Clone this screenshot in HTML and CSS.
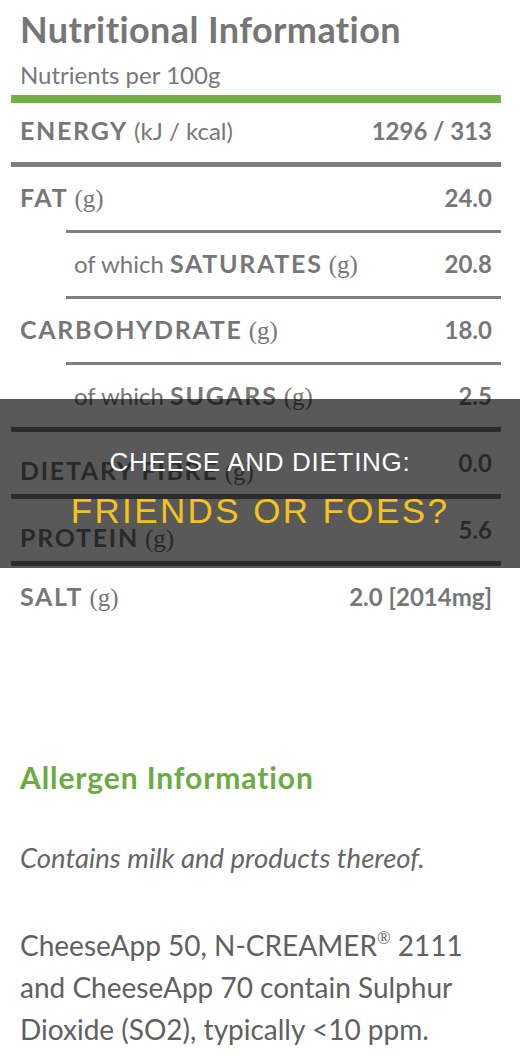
FILE: index.html
```html
<!DOCTYPE html>
<html lang="en">
<head>
<meta charset="utf-8">
<title>Cheese and Dieting: Friends or Foes?</title>
<link rel="stylesheet" href="styles.css">
</head>
<body>
<div class="page">
  <section class="nutrition">
    <h1 class="title">Nutritional Information</h1>
    <p class="subtitle">Nutrients per 100g</p>
    <div class="rule green"></div>

    <div class="row energy"><span class="name"><b>ENERGY</b> <span class="unit">(kJ / kcal)</span></span><b class="val">1296 / 313</b></div>
    <div class="rule thick"></div>
    <div class="row tall"><span class="name"><b>FAT</b> <span class="unit serif">(g)</span></span><b class="val">24.0</b></div>
    <div class="rule thin"></div>
    <div class="row tall sub"><span class="name"><span class="lite">of which</span> <b>SATURATES</b> <span class="unit serif">(g)</span></span><b class="val">20.8</b></div>
    <div class="rule thin"></div>
    <div class="row tall"><span class="name"><b>CARBOHYDRATE</b> <span class="unit serif">(g)</span></span><b class="val">18.0</b></div>
    <div class="rule thin"></div>
    <div class="row sub"><span class="name"><span class="lite">of which</span> <b>SUGARS</b> <span class="unit serif">(g)</span></span><b class="val">2.5</b></div>
    <div class="rule thick"></div>
    <div class="row"><span class="name drop"><b>DIETARY FIBRE</b> <span class="unit serif">(g)</span></span><b class="val">0.0</b></div>
    <div class="rule thick"></div>
    <div class="row"><span class="name drop"><b>PROTEIN</b> <span class="unit serif">(g)</span></span><b class="val">5.6</b></div>
    <div class="rule thick"></div>
    <div class="row"><span class="name"><b>SALT</b> <span class="unit serif">(g)</span></span><b class="val">2.0 [2014mg]</b></div>
  </section>

  <section class="allergen">
    <h2 class="allergen-title">Allergen Information</h2>
    <p class="contains">Contains milk and products thereof.</p>
    <p class="note">CheeseApp 50, N-CREAMER<sup class="reg">®</sup> 2111 and CheeseApp 70 contain Sulphur Dioxide (SO2), typically &lt;10 ppm.</p>
  </section>

  <div class="banner">
    <div class="banner-line1">CHEESE AND DIETING:</div>
    <div class="banner-line2">FRIENDS OR FOES?</div>
  </div>
</div>
</body>
</html>
```

FILE: styles.css
```css
* { box-sizing: border-box; }

html, body {
  margin: 0;
  padding: 0;
  background: #ffffff;
}

.page {
  position: relative;
  width: 520px;
  height: 1063px;
  overflow: hidden;
  font-family: "Lato", "Noto Sans", sans-serif;
  color: #777777;
}

.nutrition {
  margin: 0 19px 0 11px;
}

.title {
  margin: 8px 0 0;
  padding-left: 9px;
  font-size: 36px;
  line-height: 42px;
  font-weight: 700;
  color: #767676;
  letter-spacing: 0.4px;
}

.subtitle {
  margin: 11px 0 0;
  padding-left: 9px;
  font-size: 24px;
  line-height: 28px;
  color: #787878;
}

.rule { background: #7f7f7f; }
.rule.green { height: 8px; margin-top: 6px; background: #70b142; }
.rule.thick { height: 5px; }
.rule.thin { height: 3px; margin-left: 55px; }

.row {
  display: flex;
  justify-content: space-between;
  align-items: flex-start;
  height: 62px;
  padding: 16px 9px 0 9px;
  font-size: 24px;
  line-height: 28px;
  color: #777777;
}
.row.energy { height: 59px; padding-top: 13px; }
.row.tall { height: 63px; padding-top: 16px; }
.row.sub { margin-left: 55px; padding-left: 8px; }

.name { white-space: nowrap; }
.name.drop { margin-top: 8px; }
.name b { font-size: 25px; font-weight: 700; letter-spacing: 1.7px; }
.val { font-weight: 700; letter-spacing: 0; white-space: nowrap; margin-top: 1px; }
.unit { font-weight: 400; }
.serif { font-family: "Liberation Serif", serif; font-size: 25px; }
.lite { font-weight: 400; }

.allergen {
  padding-left: 20px;
}

.allergen-title {
  margin: 132px 0 0;
  font-size: 30px;
  line-height: 34px;
  font-weight: 700;
  color: #6aab44;
  letter-spacing: 0.9px;
}

.contains {
  margin: 48px 0 0;
  font-style: italic;
  font-size: 27.5px;
  line-height: 32px;
  color: #666666;
}

.note {
  margin: 50px 0 0;
  width: 490px;
  font-size: 28px;
  line-height: 42px;
  color: #606060;
}

.reg {
  font-size: 18px;
  vertical-align: 12px;
  line-height: 0;
  font-family: "Liberation Serif", serif;
}

.banner {
  position: absolute;
  left: 0;
  top: 399px;
  width: 520px;
  height: 169px;
  background: rgba(0, 0, 0, 0.65);
  padding-top: 47px;
  text-align: center;
  font-family: "Liberation Sans", Arial, sans-serif;
}

.banner-line1 {
  font-size: 26px;
  line-height: 32px;
  color: #ffffff;
  letter-spacing: 0.7px;
}

.banner-line2 {
  margin-top: 12px;
  font-size: 35px;
  line-height: 42px;
  color: #f6c21c;
  letter-spacing: 2.4px;
}
```
